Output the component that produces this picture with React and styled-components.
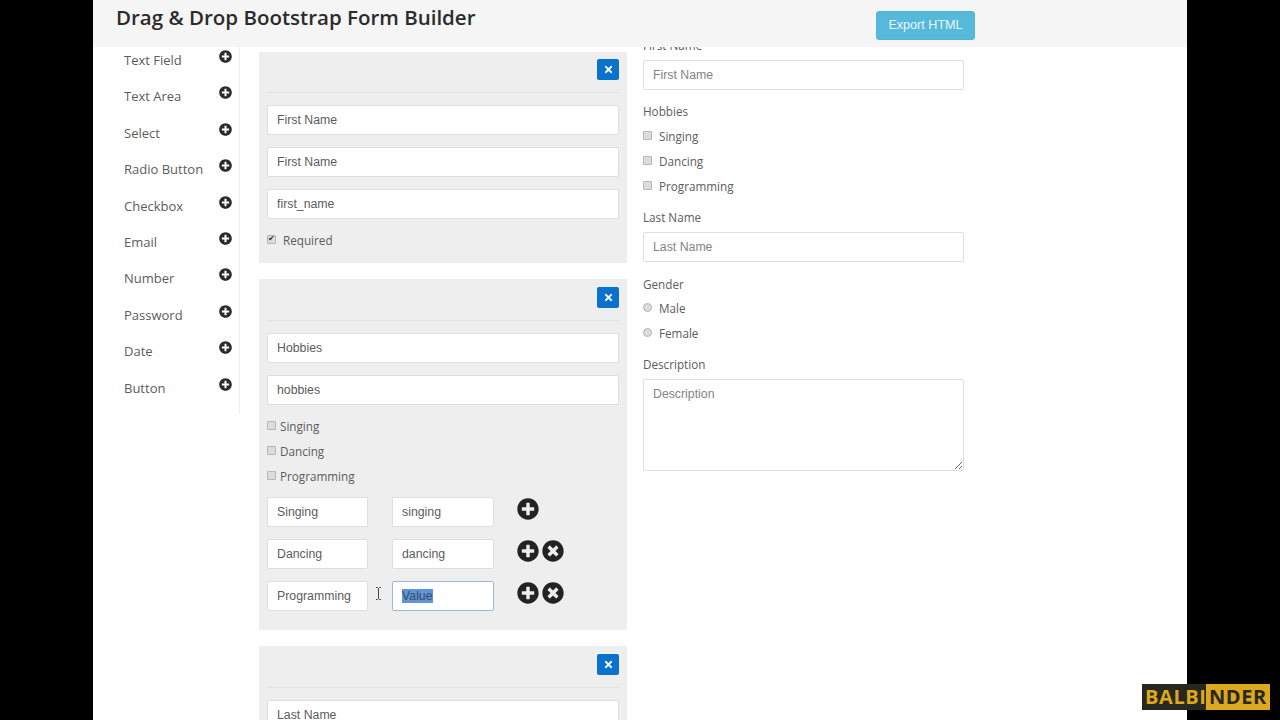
import React from 'react'
import styled, { createGlobalStyle } from 'styled-components'
import { FaPlusCircle, FaTimesCircle, FaTimes } from 'react-icons/fa'

const Global = createGlobalStyle`
  html, body { margin: 0; padding: 0; background: #000; }
  body { width: 1280px; height: 720px; overflow: hidden; font-family: "Open Sans", "Liberation Sans", sans-serif; }
  * { box-sizing: border-box; }
`

const Page = styled.div`
  position: relative;
  width: 1280px;
  height: 720px;
  padding: 0 93px;
  overflow: hidden;
  background: #000;
`

const Shell = styled.div`
  height: 720px;
  background: #fff;
  display: flex;
  flex-direction: column;
  overflow: hidden;
`

const Header = styled.header`
  position: relative;
  z-index: 1;
  flex: none;
  height: 47px;
  padding: 3px 212px 0 23px;
  background: #f5f5f6;
  display: flex;
  justify-content: space-between;
  align-items: flex-start;
`

const Title = styled.h1`
  margin: 0;
  font-size: 20.5px;
  line-height: 29px;
  font-weight: 600;
  color: #2b2b2b;
`

const ExportButton = styled.button`
  margin-top: 8px;
  width: 99px;
  height: 29px;
  border: 1px solid #52b5d6;
  border-radius: 3px;
  background: #56b9d9;
  color: #eaf6fb;
  font: 400 12.6px/1 "Liberation Sans", Arial, sans-serif;
  padding: 0;
`

const Body = styled.div`
  flex: 1;
  min-height: 0;
  display: flex;
  align-items: flex-start;
`

const Sidebar = styled.ul`
  flex: none;
  width: 147px;
  margin: 0;
  padding: 0 7px 13px 31px;
  list-style: none;
  border-right: 1px solid #eee;
  display: flex;
  flex-direction: column;
  gap: 10.4px;
`

const Tool = styled.li`
  height: 26px;
  display: flex;
  justify-content: space-between;
  align-items: flex-start;
  font-size: 13px;
  line-height: 26px;
  color: #5c5c5c;

  svg {
    margin-top: 3px;
    font-size: 13px;
    color: #2b2b2b;
  }
`

const Builder = styled.div`
  flex: none;
  width: 368px;
  margin: 4.5px 0 0 19px;
  display: flex;
  flex-direction: column;
  gap: 16px;
`

const Card = styled.section`
  background: #eeeeef;
  padding: 7.5px 8px ${p => p.$bottom ?? 19.5}px;
`

const CardHead = styled.div`
  display: flex;
  justify-content: flex-end;
  padding-bottom: 12px;
  margin-bottom: 12px;
  border-bottom: 1px solid #e2e2e3;
`

const RemoveButton = styled.button`
  width: 22px;
  height: 21px;
  padding: 0;
  border: none;
  border-radius: 2px;
  background: #0a72cc;
  color: #f2f6fa;
  font-size: 11px;
  display: flex;
  align-items: center;
  justify-content: center;
`

const Fields = styled.div`
  display: flex;
  flex-direction: column;
  gap: 12px;
`

const Input = styled.input`
  display: block;
  width: 100%;
  height: 30px;
  padding: 0 9px;
  border: 1px solid #dedede;
  border-radius: 2px;
  background: #fff;
  font: 400 12.3px/28px "Liberation Sans", Arial, sans-serif;
  color: #5c5c5c;
  outline: none;

  &::placeholder { color: #848484; opacity: 1; }
`

const FocusField = styled.div`
  height: 30px;
  padding: 0 9px;
  border: 1px solid #9fb8d2;
  border-radius: 2px;
  background: #fff;
  font: 400 12.3px/28px "Liberation Sans", Arial, sans-serif;
  color: #5c5c5c;
`

const Selected = styled.span`
  background: #5d94dc;
  color: #3d4a5c;
`

const Check = styled.label`
  display: flex;
  align-items: center;
  height: ${p => p.$height || 25}px;
  font-size: 11.7px;
  color: #5c5c5c;
`

const Tick = styled.input`
  appearance: none;
  position: relative;
  flex: none;
  width: 9px;
  height: 9px;
  margin: ${p => p.$lift ?? -2}px ${p => p.$gap ?? 7}px 0 0;
  border: 1px solid #b5b5b5;
  border-radius: ${p => (p.type === 'radio' ? '50%' : '1px')};
  background: #dcdcdc;

  &:checked::after {
    content: "✔";
    position: absolute;
    left: 0;
    top: -2px;
    font-size: 8px;
    line-height: 10px;
    color: #333;
  }
`

const Choices = styled.div`
  margin-top: 9px;
  margin-bottom: 8px;
`

const OptionRow = styled.div`
  position: relative;
  display: grid;
  grid-template-columns: 101px 102px auto;
  column-gap: 24px;
  align-items: start;
`

const OptionIcons = styled.div`
  display: flex;
  gap: 3px;
  margin-left: -1px;
  font-size: 22px;
  line-height: 0;
  color: #232323;
  padding-top: 1px;
`

const Cursor = styled.svg`
  position: absolute;
  left: 108px;
  top: 6px;
  width: 7px;
  height: 13px;
`

const Preview = styled.form`
  flex: none;
  width: 321px;
  margin: -11px 0 0 16px;
  display: flex;
  flex-direction: column;
`

const Label = styled.div`
  font-size: 11.7px;
  line-height: 18px;
  color: #5c5c5c;
  margin-bottom: ${p => p.$gap ?? 6}px;
  margin-top: ${p => p.$top ?? 0}px;
`

const TextBox = styled.textarea`
  display: block;
  width: 100%;
  height: 92px;
  padding: 6px 9px;
  border: 1px solid #dedede;
  border-radius: 2px;
  font: 400 12.3px/17px "Liberation Sans", Arial, sans-serif;
  outline: none;

  &::placeholder { color: #848484; opacity: 1; }
`

const Logo = styled.div`
  position: absolute;
  left: 1142px;
  top: 684px;
  width: 128px;
  height: 26px;
  display: flex;
  font: 700 20px/26px "Open Sans", sans-serif;
  letter-spacing: 0.6px;
`

const LogoPart = styled.span`
  padding-left: ${p => p.$pad}px;
  width: ${p => p.$width}px;
  background: ${p => (p.$light ? '#dca81e' : '#2a2620')};
  color: ${p => (p.$light ? '#2a2620' : '#dca81e')};
`

const tools = ['Text Field', 'Text Area', 'Select', 'Radio Button', 'Checkbox', 'Email', 'Number', 'Password', 'Date', 'Button']
const hobbies = ['Singing', 'Dancing', 'Programming']

const Head = () => (
  <CardHead>
    <RemoveButton type="button"><FaTimes /></RemoveButton>
  </CardHead>
)

export default function App() {
  return (
    <Page>
      <Global />
      <Shell>
        <Header>
          <Title>Drag &amp; Drop Bootstrap Form Builder</Title>
          <ExportButton type="button">Export HTML</ExportButton>
        </Header>
        <Body>
          <Sidebar>
            {tools.map(t => (
              <Tool key={t}>{t}<FaPlusCircle /></Tool>
            ))}
          </Sidebar>

          <Builder>
            <Card $bottom={11}>
              <Head />
              <Fields>
                <Input readOnly value="First Name" />
                <Input readOnly value="First Name" />
                <Input readOnly value="first_name" />
              </Fields>
              <Check $height={24} style={{ marginTop: 9 }}>
                <Tick type="checkbox" defaultChecked />Required
              </Check>
            </Card>

            <Card>
              <Head />
              <Fields>
                <Input readOnly value="Hobbies" />
                <Input readOnly value="hobbies" />
              </Fields>
              <Choices>
                {hobbies.map(h => (
                  <Check key={h}><Tick type="checkbox" $gap={4} />{h}</Check>
                ))}
              </Choices>
              <Fields>
                <OptionRow>
                  <Input readOnly value="Singing" />
                  <Input readOnly value="singing" />
                  <OptionIcons><FaPlusCircle /></OptionIcons>
                </OptionRow>
                <OptionRow>
                  <Input readOnly value="Dancing" />
                  <Input readOnly value="dancing" />
                  <OptionIcons><FaPlusCircle /><FaTimesCircle /></OptionIcons>
                </OptionRow>
                <OptionRow>
                  <Input readOnly value="Programming" />
                  <FocusField><Selected>Value</Selected></FocusField>
                  <OptionIcons><FaPlusCircle /><FaTimesCircle /></OptionIcons>
                  <Cursor viewBox="0 0 7 13">
                    <path d="M1 .5h1.5l1 1 1-1H6M3.5 1.5v10M1 12.5h1.5l1-1 1 1H6" fill="none" stroke="#444" strokeWidth="1" />
                  </Cursor>
                </OptionRow>
              </Fields>
            </Card>

            <Card>
              <Head />
              <Fields>
                <Input readOnly value="Last Name" />
              </Fields>
            </Card>
          </Builder>

          <Preview>
            <Label>First Name</Label>
            <Input placeholder="First Name" />
            <Label $top={12} $gap={3}>Hobbies</Label>
            {hobbies.map(h => (
              <Check key={h}><Tick type="checkbox" $lift={0} />{h}</Check>
            ))}
            <Label $top={10} $gap={6}>Last Name</Label>
            <Input placeholder="Last Name" />
            <Label $top={13} $gap={2}>Gender</Label>
            <Check><Tick type="radio" name="gender" $lift={0} />Male</Check>
            <Check><Tick type="radio" name="gender" $lift={0} />Female</Check>
            <Label $top={10} $gap={6}>Description</Label>
            <TextBox placeholder="Description" />
          </Preview>
        </Body>
      </Shell>
      <Logo>
        <LogoPart $pad={3} $width={64}>BALBI</LogoPart>
        <LogoPart $light $pad={3} $width={64}>NDER</LogoPart>
      </Logo>
    </Page>
  )
}
